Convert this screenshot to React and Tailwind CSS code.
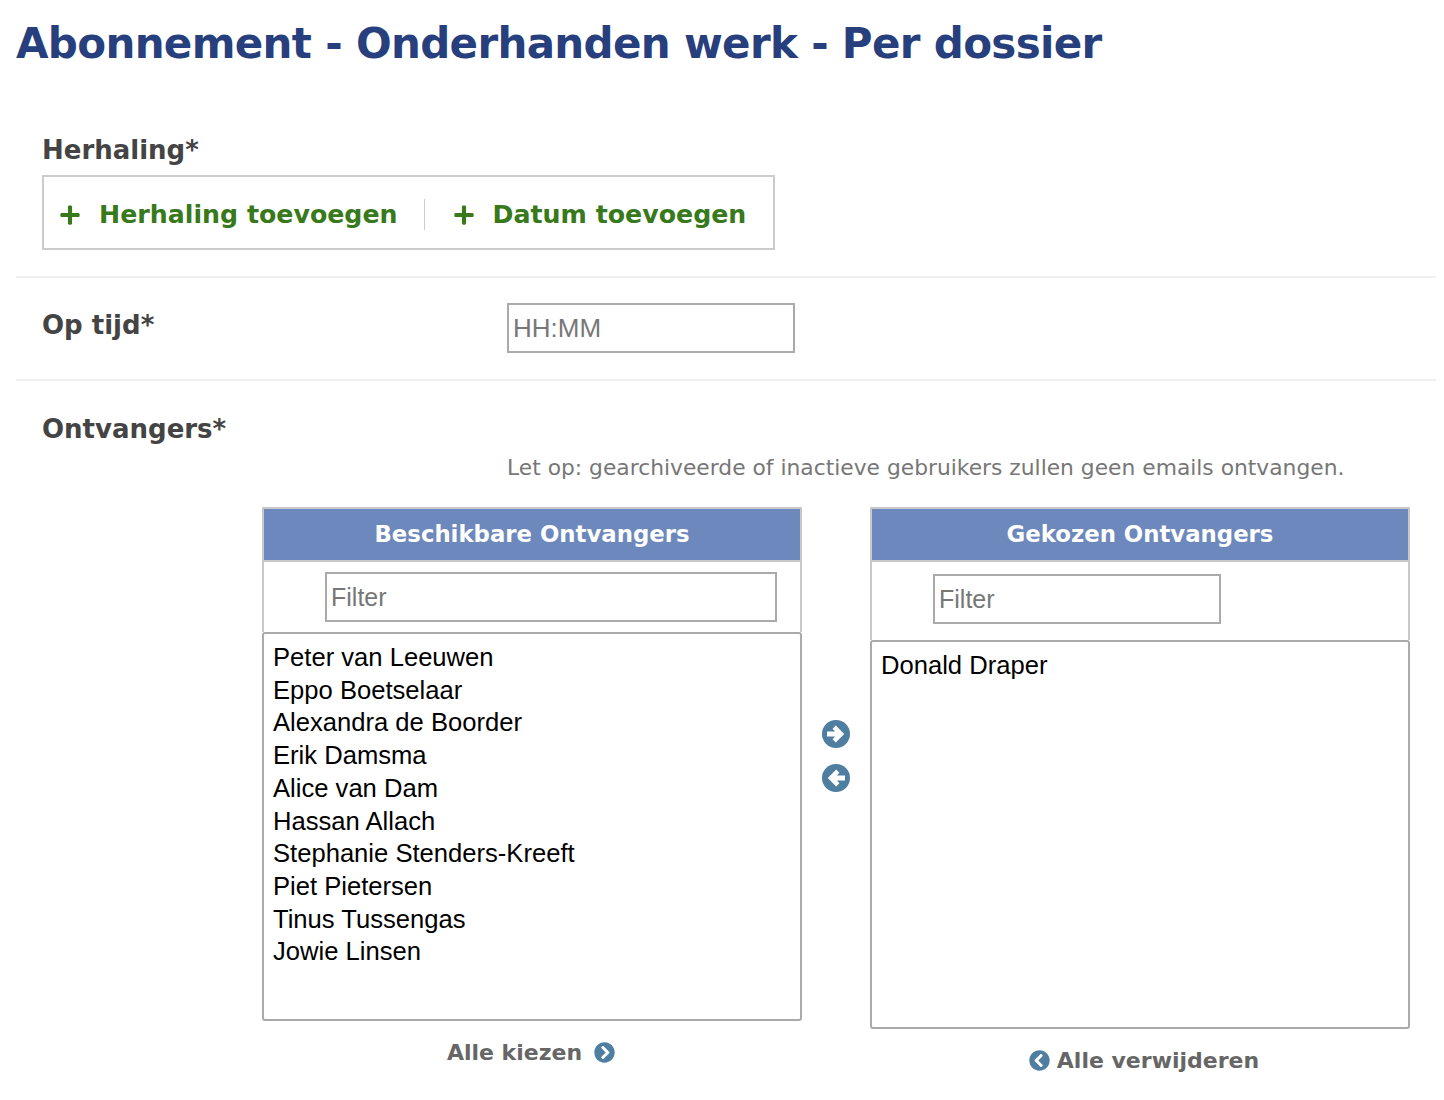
import { FaChevronCircleLeft, FaChevronCircleRight, FaPlus } from 'react-icons/fa';

const available = [
    'Peter van Leeuwen',
    'Eppo Boetselaar',
    'Alexandra de Boorder',
    'Erik Damsma',
    'Alice van Dam',
    'Hassan Allach',
    'Stephanie Stenders-Kreeft',
    'Piet Pietersen',
    'Tinus Tussengas',
    'Jowie Linsen',
];

const verdana = "font-['DejaVu_Sans',sans-serif]";

const AddLink = ({ children }) => (
    <a className="flex items-center gap-[18px] text-[25.25px] font-bold leading-none text-[#37791b]">
        <FaPlus className="w-[22px] h-[22px]" />
        <span>{children}</span>
    </a>
);

// circle with a thick white arrow, pointing right unless flipped
const ArrowButton = ({ className }) => (
    <svg viewBox="0 0 28 28" className={`w-[28px] h-[28px] ${className || ''}`}>
        <circle cx="14" cy="14" r="14" fill="#4f7ea0" />
        <path
            d="M5 11.4H13.2L10.6 8.8L13.8 5.6L22.2 14L13.8 22.4L10.6 19.2L13.2 16.6H5Z"
            fill="#fff"
        />
    </svg>
);

const PickList = ({ title, items, filterClass, filterWrapClass, footer }) => (
    <div className="w-[540px] flex flex-col">
        <div className="border-2 border-[#c8c8c8] border-b-0">
            <div className="h-[51px] bg-[#6d88bd] border-b-2 border-[#c8c8c8] box-content flex items-center justify-center text-white font-bold text-[22.8px]">
                {title}
            </div>
            <div className={filterWrapClass}>
                <input
                    placeholder="Filter"
                    className={`h-[50px] border-2 border-[#aaa] px-1 text-[25px] font-['Liberation_Sans',sans-serif] placeholder:text-[#777] outline-none ${filterClass}`}
                />
            </div>
        </div>
        <div className="h-[389px] border-2 border-[#aaa] rounded-[3px] px-[9px] pt-[7px] text-[25.6px] leading-[32.7px] text-black font-['Liberation_Sans',sans-serif]">
            {items.map((name) => (
                <div key={name}>{name}</div>
            ))}
        </div>
        {footer}
    </div>
);

export default function App() {
    return (
        <div className={`${verdana} bg-white min-h-[1100px] pl-4 pr-2 text-[#444]`}>
            <h1 className="pt-[16px] h-[107px] text-[42px] leading-[56px] tracking-[-0.67px] font-bold text-[#273f7d]">
                Abonnement - Onderhanden werk - Per dossier
            </h1>

            {/* Herhaling */}
            <div className="pl-[26px] h-[171px] border-b-2 border-[#f0f0f0] box-border">
                <div className="pt-[26px] h-[68px] text-[26px] leading-[34px] font-bold">Herhaling*</div>
                <div className="w-[733px] h-[75px] border-2 border-[#ccc] flex items-center pl-[15px] pt-1">
                    <AddLink>Herhaling toevoegen</AddLink>
                    <div className="w-px h-[31px] bg-[#ccc] ml-[26px] mr-[28px]" />
                    <AddLink>Datum toevoegen</AddLink>
                </div>
            </div>

            {/* Op tijd */}
            <div className="pl-[26px] h-[103px] border-b-2 border-[#f0f0f0] flex box-border">
                <div className="w-[465px] pt-[30px] text-[26px] leading-[34px] font-bold">Op tijd*</div>
                <input
                    placeholder="HH:MM"
                    className="mt-[25px] w-[288px] h-[50px] border-2 border-[#aaa] px-1 text-[26px] font-['Liberation_Sans',sans-serif] placeholder:text-[#777] outline-none"
                />
            </div>

            {/* Ontvangers */}
            <div className="pl-[26px] pt-[31px] text-[26px] leading-[34px] font-bold">Ontvangers*</div>
            <div className="pl-[491px] pt-[7px] h-[62px] text-[21.8px] leading-[30px] text-[#777]">
                Let op: gearchiveerde of inactieve gebruikers zullen geen emails ontvangen.
            </div>

            <div className="pl-[246px] -mt-px flex">
                <PickList
                    title="Beschikbare Ontvangers"
                    items={available}
                    filterWrapClass="h-[70px] pl-[61px] pt-[10px]"
                    filterClass="w-[452px]"
                    footer={
                        <div className="h-[62px] pr-[2px] flex items-center justify-center gap-3 text-[22px] font-bold text-[#666]">
                            Alle kiezen
                            <FaChevronCircleRight className="w-[21px] h-[21px] text-[#4f7ea0]" />
                        </div>
                    }
                />
                <div className="w-[68px] pt-[213px] flex flex-col items-center gap-4">
                    <ArrowButton />
                    <ArrowButton className="rotate-180" />
                </div>
                <PickList
                    title="Gekozen Ontvangers"
                    items={['Donald Draper']}
                    filterWrapClass="h-[78px] pl-[61px] pt-[12px]"
                    filterClass="w-[288px]"
                    footer={
                        <div className="h-[62px] pl-2 flex items-center justify-center gap-[7px] text-[22px] font-bold text-[#666]">
                            <FaChevronCircleLeft className="w-[21px] h-[21px] text-[#4f7ea0]" />
                            Alle verwijderen
                        </div>
                    }
                />
            </div>
        </div>
    );
}
